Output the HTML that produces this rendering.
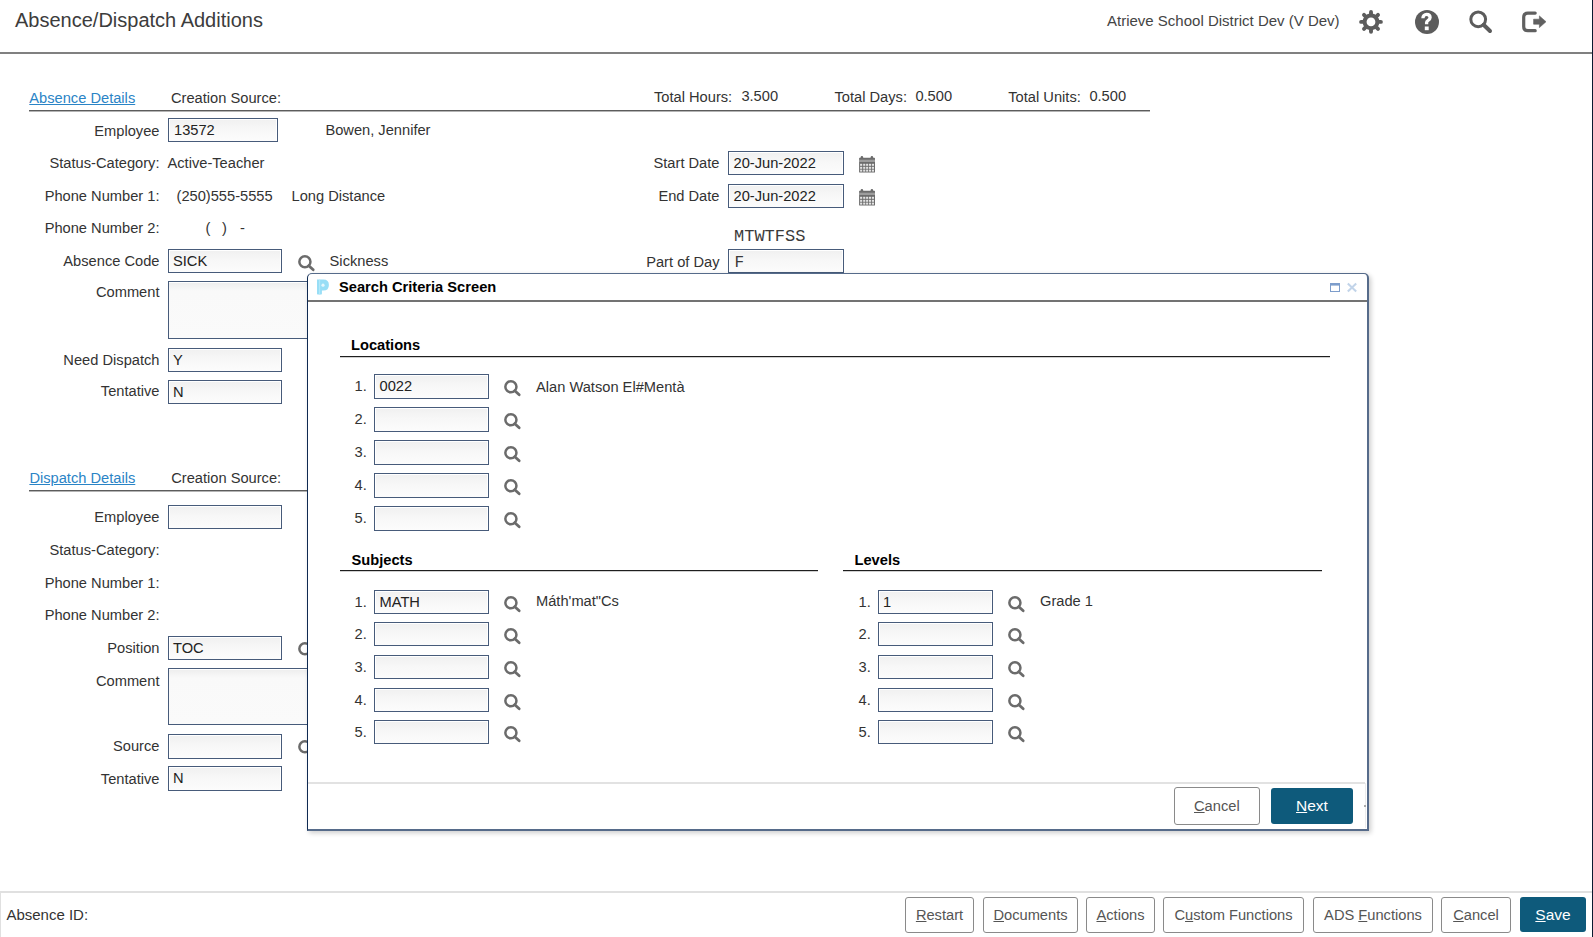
<!DOCTYPE html>
<html><head><meta charset="utf-8"><title>Absence/Dispatch Additions</title>
<style>
html,body{margin:0;padding:0;background:#fff;}
body{width:1593px;height:937px;position:relative;overflow:hidden;font-family:"Liberation Sans",sans-serif;}
.t{position:absolute;white-space:nowrap;}
.ic{position:absolute;overflow:visible;}
.inp{position:absolute;box-sizing:border-box;border:1px solid #475b7a;background:linear-gradient(#f0f0f0,#f7f7f7 45%,#fcfcfc);box-shadow:inset 0 1px 0 #fff,inset 1px 0 0 #fff,inset -1px 0 0 #fff;}
.ta{background:linear-gradient(#ededed,#f9f9f9 9px,#fafafa);box-shadow:inset 0 1px 0 #fff;}
#modal{position:absolute;left:307px;top:272.5px;width:1062px;height:558px;box-sizing:border-box;border:1.5px solid #566b8a;border-right-width:2px;border-bottom-width:2px;border-left:1px solid #0f2a52;border-radius:5px 5px 0 0;background:#fff;box-shadow:2px 2px 5px rgba(0,0,0,0.2);}
.btn{position:absolute;border:1px solid #8a8a8a;border-radius:3px;background:#fff;}
.btnp{position:absolute;background:#0e5a7b;border-radius:3px;}
u{text-decoration:underline;}
</style></head><body>
<div class="t" style="left:15.00px;top:10.07px;font-size:20px;line-height:20px;color:#3c3c3c;font-weight:400;font-family:'Liberation Sans', sans-serif;">Absence/Dispatch Additions</div>
<div class="t" style="left:1107.00px;top:13.40px;font-size:15px;line-height:15px;color:#444;font-weight:400;font-family:'Liberation Sans', sans-serif;">Atrieve School District Dev (V Dev)</div>
<div style="position:absolute;left:0px;top:52px;width:1592px;height:2px;background:#808080"></div>
<div style="position:absolute;left:1592px;top:0px;width:1px;height:937px;background:#0b1a30"></div>
<svg class="ic" style="left:1355px;top:6px" width="32" height="32" viewBox="0 0 32 32">
<circle cx="16" cy="15.9" r="8.4" fill="#5c5c5c"/><line x1="16" y1="15.9" x2="25.90" y2="15.90" stroke="#5c5c5c" stroke-width="3.9" stroke-linecap="round"/><line x1="16" y1="15.9" x2="23.00" y2="22.90" stroke="#5c5c5c" stroke-width="3.9" stroke-linecap="round"/><line x1="16" y1="15.9" x2="16.00" y2="25.80" stroke="#5c5c5c" stroke-width="3.9" stroke-linecap="round"/><line x1="16" y1="15.9" x2="9.00" y2="22.90" stroke="#5c5c5c" stroke-width="3.9" stroke-linecap="round"/><line x1="16" y1="15.9" x2="6.10" y2="15.90" stroke="#5c5c5c" stroke-width="3.9" stroke-linecap="round"/><line x1="16" y1="15.9" x2="9.00" y2="8.90" stroke="#5c5c5c" stroke-width="3.9" stroke-linecap="round"/><line x1="16" y1="15.9" x2="16.00" y2="6.00" stroke="#5c5c5c" stroke-width="3.9" stroke-linecap="round"/><line x1="16" y1="15.9" x2="23.00" y2="8.90" stroke="#5c5c5c" stroke-width="3.9" stroke-linecap="round"/>
<circle cx="16" cy="15.9" r="4.4" fill="#fff"/></svg>
<svg class="ic" style="left:1411px;top:6px" width="32" height="32" viewBox="0 0 32 32">
<circle cx="16" cy="15.9" r="12" fill="#5c5c5c"/>
<path d="M11.9 12.2 C11.9 9.8 13.6 8.3 15.6 8.3 C17.6 8.3 19.1 9.6 19.1 11.6 C19.1 13.2 18 14 16.9 14.6 C16 15.1 15.6 15.6 15.6 16.8 V18.2" fill="none" stroke="#fff" stroke-width="3.3"/>
<rect x="13.8" y="20.5" width="3.9" height="3.7" fill="#fff"/></svg>
<svg class="ic" style="left:1465px;top:6px" width="32" height="32" viewBox="0 0 32 32">
<circle cx="13.2" cy="13.3" r="7.4" fill="none" stroke="#5c5c5c" stroke-width="3"/>
<line x1="18.6" y1="18.8" x2="25" y2="25" stroke="#5c5c5c" stroke-width="4" stroke-linecap="round"/></svg>
<svg class="ic" style="left:1518px;top:6px" width="32" height="32" viewBox="0 0 32 32">
<path d="M17.2 7.1 H9.8 Q5.7 7.1 5.7 11.2 V20.6 Q5.7 24.7 9.8 24.7 H17.2" fill="none" stroke="#606060" stroke-width="3.2" stroke-linecap="round"/>
<path d="M15.6 13.2 H21.4 V9.9 L28 15.7 L21.4 21.6 V18.2 H15.6 Z" fill="#606060" stroke="#606060" stroke-width="0.6" stroke-linejoin="round"/></svg>
<div class="t" style="left:29.30px;top:90.88px;font-size:14.67px;line-height:14.67px;color:#2a84c6;font-weight:400;font-family:'Liberation Sans', sans-serif;text-decoration:underline;">Absence Details</div>
<div class="t" style="left:171.00px;top:90.88px;font-size:14.67px;line-height:14.67px;color:#333;font-weight:400;font-family:'Liberation Sans', sans-serif;">Creation Source:</div>
<div class="t" style="left:654.00px;top:89.88px;font-size:14.67px;line-height:14.67px;color:#333;font-weight:400;font-family:'Liberation Sans', sans-serif;">Total Hours:</div>
<div class="t" style="left:741.40px;top:89.18px;font-size:14.67px;line-height:14.67px;color:#333;font-weight:400;font-family:'Liberation Sans', sans-serif;">3.500</div>
<div class="t" style="left:834.50px;top:89.88px;font-size:14.67px;line-height:14.67px;color:#333;font-weight:400;font-family:'Liberation Sans', sans-serif;">Total Days:</div>
<div class="t" style="left:915.40px;top:89.18px;font-size:14.67px;line-height:14.67px;color:#333;font-weight:400;font-family:'Liberation Sans', sans-serif;">0.500</div>
<div class="t" style="left:1008.30px;top:89.88px;font-size:14.67px;line-height:14.67px;color:#333;font-weight:400;font-family:'Liberation Sans', sans-serif;">Total Units:</div>
<div class="t" style="left:1089.40px;top:89.18px;font-size:14.67px;line-height:14.67px;color:#333;font-weight:400;font-family:'Liberation Sans', sans-serif;">0.500</div>
<div style="position:absolute;left:29px;top:110px;width:1121px;height:1px;background:#5c5c5c"></div>
<div style="position:absolute;left:29px;top:111px;width:1121px;height:1px;background:#b4b4b4"></div>
<div class="t" style="right:1433.50px;top:123.58px;font-size:14.67px;line-height:14.67px;color:#333;font-weight:400;font-family:'Liberation Sans', sans-serif;">Employee</div>
<div class="inp" style="left:168px;top:118px;width:110px;height:24px;"></div>
<div class="t" style="left:174.00px;top:123.18px;font-size:14.67px;line-height:14.67px;color:#222;font-weight:400;font-family:'Liberation Sans', sans-serif;">13572</div>
<div class="t" style="left:325.40px;top:122.88px;font-size:14.67px;line-height:14.67px;color:#333;font-weight:400;font-family:'Liberation Sans', sans-serif;">Bowen, Jennifer</div>
<div class="t" style="right:1433.50px;top:155.98px;font-size:14.67px;line-height:14.67px;color:#333;font-weight:400;font-family:'Liberation Sans', sans-serif;">Status-Category:</div>
<div class="t" style="left:167.50px;top:155.98px;font-size:14.67px;line-height:14.67px;color:#333;font-weight:400;font-family:'Liberation Sans', sans-serif;">Active-Teacher</div>
<div class="t" style="right:1433.50px;top:188.58px;font-size:14.67px;line-height:14.67px;color:#333;font-weight:400;font-family:'Liberation Sans', sans-serif;">Phone Number 1:</div>
<div class="t" style="left:176.50px;top:188.58px;font-size:14.67px;line-height:14.67px;color:#333;font-weight:400;font-family:'Liberation Sans', sans-serif;">(250)555-5555</div>
<div class="t" style="left:291.50px;top:188.58px;font-size:14.67px;line-height:14.67px;color:#333;font-weight:400;font-family:'Liberation Sans', sans-serif;">Long Distance</div>
<div class="t" style="right:1433.50px;top:221.28px;font-size:14.67px;line-height:14.67px;color:#333;font-weight:400;font-family:'Liberation Sans', sans-serif;">Phone Number 2:</div>
<div class="t" style="left:205.50px;top:221.28px;font-size:14.67px;line-height:14.67px;color:#333;font-weight:400;font-family:'Liberation Sans', sans-serif;">(</div>
<div class="t" style="left:222.00px;top:221.28px;font-size:14.67px;line-height:14.67px;color:#333;font-weight:400;font-family:'Liberation Sans', sans-serif;">)</div>
<div class="t" style="left:240.00px;top:221.28px;font-size:14.67px;line-height:14.67px;color:#333;font-weight:400;font-family:'Liberation Sans', sans-serif;">-</div>
<div class="t" style="right:1433.50px;top:254.28px;font-size:14.67px;line-height:14.67px;color:#333;font-weight:400;font-family:'Liberation Sans', sans-serif;">Absence Code</div>
<div class="inp" style="left:168px;top:249px;width:114px;height:24px;"></div>
<div class="t" style="left:173.00px;top:254.18px;font-size:14.67px;line-height:14.67px;color:#222;font-weight:400;font-family:'Liberation Sans', sans-serif;">SICK</div>
<svg class="ic" style="left:297.5px;top:255px" width="18" height="17" viewBox="0 0 18 17"><circle cx="6.9" cy="6.8" r="5.55" fill="none" stroke="#6b6b6b" stroke-width="2.5"/><line x1="10.8" y1="10.7" x2="15.2" y2="14.8" stroke="#6b6b6b" stroke-width="2.8" stroke-linecap="round"/></svg>
<div class="t" style="left:329.60px;top:253.68px;font-size:14.67px;line-height:14.67px;color:#333;font-weight:400;font-family:'Liberation Sans', sans-serif;">Sickness</div>
<div class="t" style="right:1433.50px;top:285.08px;font-size:14.67px;line-height:14.67px;color:#333;font-weight:400;font-family:'Liberation Sans', sans-serif;">Comment</div>
<div class="inp ta" style="left:168px;top:281px;width:170px;height:58px;"></div>
<div class="t" style="right:1433.50px;top:352.68px;font-size:14.67px;line-height:14.67px;color:#333;font-weight:400;font-family:'Liberation Sans', sans-serif;">Need Dispatch</div>
<div class="inp" style="left:168px;top:348px;width:114px;height:24px;"></div>
<div class="t" style="left:173.00px;top:353.18px;font-size:14.67px;line-height:14.67px;color:#222;font-weight:400;font-family:'Liberation Sans', sans-serif;">Y</div>
<div class="t" style="right:1433.50px;top:384.48px;font-size:14.67px;line-height:14.67px;color:#333;font-weight:400;font-family:'Liberation Sans', sans-serif;">Tentative</div>
<div class="inp" style="left:168px;top:380px;width:114px;height:24px;"></div>
<div class="t" style="left:173.00px;top:385.18px;font-size:14.67px;line-height:14.67px;color:#222;font-weight:400;font-family:'Liberation Sans', sans-serif;">N</div>
<div class="t" style="right:873.50px;top:156.38px;font-size:14.67px;line-height:14.67px;color:#333;font-weight:400;font-family:'Liberation Sans', sans-serif;">Start Date</div>
<div class="inp" style="left:728px;top:151px;width:116px;height:24px;"></div>
<div class="t" style="left:733.50px;top:156.18px;font-size:14.67px;line-height:14.67px;color:#222;font-weight:400;font-family:'Liberation Sans', sans-serif;">20-Jun-2022</div>
<svg class="ic" style="left:855px;top:152px" width="24" height="24" viewBox="0 0 24 24"><rect x="4.1" y="5.8" width="15.9" height="14.7" rx="0.6" fill="#6c6c6c"/><circle cx="6.9" cy="5.4" r="1.3" fill="#6c6c6c"/><circle cx="16.9" cy="5.4" r="1.3" fill="#6c6c6c"/><rect x="4.1" y="7.7" width="15.9" height="2.3" fill="#9c9c9c"/><rect x="5.1" y="11.8" width="2.1" height="2" fill="#e4e4e4"/><rect x="5.1" y="14.8" width="2.1" height="2" fill="#e4e4e4"/><rect x="5.1" y="17.6" width="2.1" height="2" fill="#e4e4e4"/><rect x="8.2" y="11.8" width="2.1" height="2" fill="#e4e4e4"/><rect x="8.2" y="14.8" width="2.1" height="2" fill="#e4e4e4"/><rect x="8.2" y="17.6" width="2.1" height="2" fill="#e4e4e4"/><rect x="11.1" y="11.8" width="2.1" height="2" fill="#e4e4e4"/><rect x="11.1" y="14.8" width="2.1" height="2" fill="#e4e4e4"/><rect x="11.1" y="17.6" width="2.1" height="2" fill="#e4e4e4"/><rect x="14.0" y="11.8" width="2.1" height="2" fill="#e4e4e4"/><rect x="14.0" y="14.8" width="2.1" height="2" fill="#e4e4e4"/><rect x="14.0" y="17.6" width="2.1" height="2" fill="#e4e4e4"/><rect x="16.9" y="11.8" width="2.1" height="2" fill="#e4e4e4"/><rect x="16.9" y="14.8" width="2.1" height="2" fill="#e4e4e4"/><rect x="16.9" y="17.6" width="2.1" height="2" fill="#e4e4e4"/></svg>
<div class="t" style="right:873.50px;top:188.88px;font-size:14.67px;line-height:14.67px;color:#333;font-weight:400;font-family:'Liberation Sans', sans-serif;">End Date</div>
<div class="inp" style="left:728px;top:184px;width:116px;height:24px;"></div>
<div class="t" style="left:733.50px;top:189.18px;font-size:14.67px;line-height:14.67px;color:#222;font-weight:400;font-family:'Liberation Sans', sans-serif;">20-Jun-2022</div>
<svg class="ic" style="left:855px;top:185px" width="24" height="24" viewBox="0 0 24 24"><rect x="4.1" y="5.8" width="15.9" height="14.7" rx="0.6" fill="#6c6c6c"/><circle cx="6.9" cy="5.4" r="1.3" fill="#6c6c6c"/><circle cx="16.9" cy="5.4" r="1.3" fill="#6c6c6c"/><rect x="4.1" y="7.7" width="15.9" height="2.3" fill="#9c9c9c"/><rect x="5.1" y="11.8" width="2.1" height="2" fill="#e4e4e4"/><rect x="5.1" y="14.8" width="2.1" height="2" fill="#e4e4e4"/><rect x="5.1" y="17.6" width="2.1" height="2" fill="#e4e4e4"/><rect x="8.2" y="11.8" width="2.1" height="2" fill="#e4e4e4"/><rect x="8.2" y="14.8" width="2.1" height="2" fill="#e4e4e4"/><rect x="8.2" y="17.6" width="2.1" height="2" fill="#e4e4e4"/><rect x="11.1" y="11.8" width="2.1" height="2" fill="#e4e4e4"/><rect x="11.1" y="14.8" width="2.1" height="2" fill="#e4e4e4"/><rect x="11.1" y="17.6" width="2.1" height="2" fill="#e4e4e4"/><rect x="14.0" y="11.8" width="2.1" height="2" fill="#e4e4e4"/><rect x="14.0" y="14.8" width="2.1" height="2" fill="#e4e4e4"/><rect x="14.0" y="17.6" width="2.1" height="2" fill="#e4e4e4"/><rect x="16.9" y="11.8" width="2.1" height="2" fill="#e4e4e4"/><rect x="16.9" y="14.8" width="2.1" height="2" fill="#e4e4e4"/><rect x="16.9" y="17.6" width="2.1" height="2" fill="#e4e4e4"/></svg>
<div class="t" style="left:734.00px;top:228.27px;font-size:17px;line-height:17px;color:#3a3a3a;font-weight:400;font-family:'Liberation Mono', monospace;">MTWTFSS</div>
<div class="t" style="right:873.50px;top:254.78px;font-size:14.67px;line-height:14.67px;color:#333;font-weight:400;font-family:'Liberation Sans', sans-serif;">Part of Day</div>
<div class="inp" style="left:728px;top:249px;width:116px;height:24px;"></div>
<div class="t" style="left:734.50px;top:255.34px;font-size:16px;line-height:16px;color:#3a3a3a;font-weight:400;font-family:'Liberation Mono', monospace;">F</div>
<div class="t" style="left:29.40px;top:471.18px;font-size:14.67px;line-height:14.67px;color:#2a84c6;font-weight:400;font-family:'Liberation Sans', sans-serif;text-decoration:underline;">Dispatch Details</div>
<div class="t" style="left:171.20px;top:471.18px;font-size:14.67px;line-height:14.67px;color:#333;font-weight:400;font-family:'Liberation Sans', sans-serif;">Creation Source:</div>
<div style="position:absolute;left:29px;top:490px;width:300px;height:1px;background:#5c5c5c"></div>
<div style="position:absolute;left:29px;top:491px;width:300px;height:1px;background:#b4b4b4"></div>
<div class="t" style="right:1433.50px;top:510.28px;font-size:14.67px;line-height:14.67px;color:#333;font-weight:400;font-family:'Liberation Sans', sans-serif;">Employee</div>
<div class="inp" style="left:168px;top:505px;width:114px;height:24px;"></div>
<div class="t" style="right:1433.50px;top:542.78px;font-size:14.67px;line-height:14.67px;color:#333;font-weight:400;font-family:'Liberation Sans', sans-serif;">Status-Category:</div>
<div class="t" style="right:1433.50px;top:575.88px;font-size:14.67px;line-height:14.67px;color:#333;font-weight:400;font-family:'Liberation Sans', sans-serif;">Phone Number 1:</div>
<div class="t" style="right:1433.50px;top:608.38px;font-size:14.67px;line-height:14.67px;color:#333;font-weight:400;font-family:'Liberation Sans', sans-serif;">Phone Number 2:</div>
<div class="t" style="right:1433.50px;top:640.88px;font-size:14.67px;line-height:14.67px;color:#333;font-weight:400;font-family:'Liberation Sans', sans-serif;">Position</div>
<div class="inp" style="left:168px;top:636px;width:114px;height:24px;"></div>
<div class="t" style="left:173.00px;top:641.18px;font-size:14.67px;line-height:14.67px;color:#222;font-weight:400;font-family:'Liberation Sans', sans-serif;">TOC</div>
<svg class="ic" style="left:297.5px;top:642px" width="18" height="17" viewBox="0 0 18 17"><circle cx="6.9" cy="6.8" r="5.55" fill="none" stroke="#6b6b6b" stroke-width="2.5"/><line x1="10.8" y1="10.7" x2="15.2" y2="14.8" stroke="#6b6b6b" stroke-width="2.8" stroke-linecap="round"/></svg>
<div class="t" style="right:1433.50px;top:673.68px;font-size:14.67px;line-height:14.67px;color:#333;font-weight:400;font-family:'Liberation Sans', sans-serif;">Comment</div>
<div class="inp ta" style="left:168px;top:668px;width:170px;height:57px;"></div>
<div class="t" style="right:1433.50px;top:739.08px;font-size:14.67px;line-height:14.67px;color:#333;font-weight:400;font-family:'Liberation Sans', sans-serif;">Source</div>
<div class="inp" style="left:168px;top:734px;width:114px;height:25px;"></div>
<svg class="ic" style="left:297.5px;top:740px" width="18" height="17" viewBox="0 0 18 17"><circle cx="6.9" cy="6.8" r="5.55" fill="none" stroke="#6b6b6b" stroke-width="2.5"/><line x1="10.8" y1="10.7" x2="15.2" y2="14.8" stroke="#6b6b6b" stroke-width="2.8" stroke-linecap="round"/></svg>
<div class="t" style="right:1433.50px;top:771.88px;font-size:14.67px;line-height:14.67px;color:#333;font-weight:400;font-family:'Liberation Sans', sans-serif;">Tentative</div>
<div class="inp" style="left:168px;top:766px;width:114px;height:25px;"></div>
<div class="t" style="left:173.00px;top:771.18px;font-size:14.67px;line-height:14.67px;color:#222;font-weight:400;font-family:'Liberation Sans', sans-serif;">N</div>
<div id="modal"></div>
<div style="position:absolute;left:308px;top:300px;width:1059px;height:2px;background:#737373"></div>
<svg class="ic" style="left:313px;top:276px" width="20" height="22" viewBox="0 0 20 22">
<path d="M4 3.6 H10.4 Q15.9 3.6 15.9 9.1 Q15.9 14.6 10.4 14.6 H8.9 V17.8 Q8.9 18.5 8.2 18.5 H4.7 Q4 18.5 4 17.8 Z" fill="#98def6"/>
<rect x="6.1" y="3.6" width="1" height="14.9" fill="#b5e9fa"/>
<circle cx="10" cy="9.2" r="1.6" fill="#e6f7fd"/></svg>
<div class="t" style="left:339.00px;top:280.08px;font-size:14.67px;line-height:14.67px;color:#000;font-weight:700;font-family:'Liberation Sans', sans-serif;">Search Criteria Screen</div>
<svg class="ic" style="left:1330px;top:283px" width="10" height="9" viewBox="0 0 10 9">
<rect x="0.5" y="0.5" width="9" height="8" fill="none" stroke="#7d9dcb" stroke-width="1"/>
<rect x="0" y="0" width="10" height="2.6" fill="#7d9dcb"/></svg>
<svg class="ic" style="left:1347px;top:283px" width="10" height="9" viewBox="0 0 10 9">
<path d="M0.8 0.6 L9.2 8.4 M9.2 0.6 L0.8 8.4" stroke="#c2d4e9" stroke-width="2.1"/></svg>
<div class="t" style="left:351.00px;top:337.68px;font-size:14.67px;line-height:14.67px;color:#000;font-weight:700;font-family:'Liberation Sans', sans-serif;">Locations</div>
<div style="position:absolute;left:340px;top:356px;width:990px;height:1px;background:#1e1e1e"></div>
<div style="position:absolute;left:340px;top:357px;width:990px;height:1px;background:#d0d0d0"></div>
<div class="t" style="left:354.50px;top:379.48px;font-size:14.67px;line-height:14.67px;color:#333;font-weight:400;font-family:'Liberation Sans', sans-serif;">1.</div>
<div class="inp" style="left:374px;top:374px;width:115px;height:25px;"></div>
<div class="t" style="left:379.50px;top:379.18px;font-size:14.67px;line-height:14.67px;color:#222;font-weight:400;font-family:'Liberation Sans', sans-serif;">0022</div>
<svg class="ic" style="left:504px;top:380px" width="18" height="17" viewBox="0 0 18 17"><circle cx="6.9" cy="6.8" r="5.55" fill="none" stroke="#6b6b6b" stroke-width="2.5"/><line x1="10.8" y1="10.7" x2="15.2" y2="14.8" stroke="#6b6b6b" stroke-width="2.8" stroke-linecap="round"/></svg>
<div class="t" style="left:354.50px;top:412.48px;font-size:14.67px;line-height:14.67px;color:#333;font-weight:400;font-family:'Liberation Sans', sans-serif;">2.</div>
<div class="inp" style="left:374px;top:407px;width:115px;height:25px;"></div>
<svg class="ic" style="left:504px;top:413px" width="18" height="17" viewBox="0 0 18 17"><circle cx="6.9" cy="6.8" r="5.55" fill="none" stroke="#6b6b6b" stroke-width="2.5"/><line x1="10.8" y1="10.7" x2="15.2" y2="14.8" stroke="#6b6b6b" stroke-width="2.8" stroke-linecap="round"/></svg>
<div class="t" style="left:354.50px;top:445.48px;font-size:14.67px;line-height:14.67px;color:#333;font-weight:400;font-family:'Liberation Sans', sans-serif;">3.</div>
<div class="inp" style="left:374px;top:440px;width:115px;height:25px;"></div>
<svg class="ic" style="left:504px;top:446px" width="18" height="17" viewBox="0 0 18 17"><circle cx="6.9" cy="6.8" r="5.55" fill="none" stroke="#6b6b6b" stroke-width="2.5"/><line x1="10.8" y1="10.7" x2="15.2" y2="14.8" stroke="#6b6b6b" stroke-width="2.8" stroke-linecap="round"/></svg>
<div class="t" style="left:354.50px;top:478.48px;font-size:14.67px;line-height:14.67px;color:#333;font-weight:400;font-family:'Liberation Sans', sans-serif;">4.</div>
<div class="inp" style="left:374px;top:473px;width:115px;height:25px;"></div>
<svg class="ic" style="left:504px;top:479px" width="18" height="17" viewBox="0 0 18 17"><circle cx="6.9" cy="6.8" r="5.55" fill="none" stroke="#6b6b6b" stroke-width="2.5"/><line x1="10.8" y1="10.7" x2="15.2" y2="14.8" stroke="#6b6b6b" stroke-width="2.8" stroke-linecap="round"/></svg>
<div class="t" style="left:354.50px;top:511.48px;font-size:14.67px;line-height:14.67px;color:#333;font-weight:400;font-family:'Liberation Sans', sans-serif;">5.</div>
<div class="inp" style="left:374px;top:506px;width:115px;height:25px;"></div>
<svg class="ic" style="left:504px;top:512px" width="18" height="17" viewBox="0 0 18 17"><circle cx="6.9" cy="6.8" r="5.55" fill="none" stroke="#6b6b6b" stroke-width="2.5"/><line x1="10.8" y1="10.7" x2="15.2" y2="14.8" stroke="#6b6b6b" stroke-width="2.8" stroke-linecap="round"/></svg>
<div class="t" style="left:536.00px;top:379.68px;font-size:14.67px;line-height:14.67px;color:#333;font-weight:400;font-family:'Liberation Sans', sans-serif;">Alan Watson El#Mentà</div>
<div class="t" style="left:351.50px;top:552.68px;font-size:14.67px;line-height:14.67px;color:#000;font-weight:700;font-family:'Liberation Sans', sans-serif;">Subjects</div>
<div style="position:absolute;left:340px;top:570px;width:478px;height:1px;background:#1e1e1e"></div>
<div style="position:absolute;left:340px;top:571px;width:478px;height:1px;background:#d0d0d0"></div>
<div class="t" style="left:854.50px;top:552.68px;font-size:14.67px;line-height:14.67px;color:#000;font-weight:700;font-family:'Liberation Sans', sans-serif;">Levels</div>
<div style="position:absolute;left:843px;top:570px;width:479px;height:1px;background:#1e1e1e"></div>
<div style="position:absolute;left:843px;top:571px;width:479px;height:1px;background:#d0d0d0"></div>
<div class="t" style="left:354.50px;top:595.48px;font-size:14.67px;line-height:14.67px;color:#333;font-weight:400;font-family:'Liberation Sans', sans-serif;">1.</div>
<div class="inp" style="left:374px;top:590px;width:115px;height:24px;"></div>
<div class="t" style="left:379.50px;top:595.18px;font-size:14.67px;line-height:14.67px;color:#222;font-weight:400;font-family:'Liberation Sans', sans-serif;">MATH</div>
<svg class="ic" style="left:504px;top:596px" width="18" height="17" viewBox="0 0 18 17"><circle cx="6.9" cy="6.8" r="5.55" fill="none" stroke="#6b6b6b" stroke-width="2.5"/><line x1="10.8" y1="10.7" x2="15.2" y2="14.8" stroke="#6b6b6b" stroke-width="2.8" stroke-linecap="round"/></svg>
<div class="t" style="left:858.50px;top:595.48px;font-size:14.67px;line-height:14.67px;color:#333;font-weight:400;font-family:'Liberation Sans', sans-serif;">1.</div>
<div class="inp" style="left:878px;top:590px;width:115px;height:24px;"></div>
<div class="t" style="left:883.00px;top:595.18px;font-size:14.67px;line-height:14.67px;color:#222;font-weight:400;font-family:'Liberation Sans', sans-serif;">1</div>
<svg class="ic" style="left:1008px;top:596px" width="18" height="17" viewBox="0 0 18 17"><circle cx="6.9" cy="6.8" r="5.55" fill="none" stroke="#6b6b6b" stroke-width="2.5"/><line x1="10.8" y1="10.7" x2="15.2" y2="14.8" stroke="#6b6b6b" stroke-width="2.8" stroke-linecap="round"/></svg>
<div class="t" style="left:354.50px;top:627.48px;font-size:14.67px;line-height:14.67px;color:#333;font-weight:400;font-family:'Liberation Sans', sans-serif;">2.</div>
<div class="inp" style="left:374px;top:622px;width:115px;height:24px;"></div>
<svg class="ic" style="left:504px;top:628px" width="18" height="17" viewBox="0 0 18 17"><circle cx="6.9" cy="6.8" r="5.55" fill="none" stroke="#6b6b6b" stroke-width="2.5"/><line x1="10.8" y1="10.7" x2="15.2" y2="14.8" stroke="#6b6b6b" stroke-width="2.8" stroke-linecap="round"/></svg>
<div class="t" style="left:858.50px;top:627.48px;font-size:14.67px;line-height:14.67px;color:#333;font-weight:400;font-family:'Liberation Sans', sans-serif;">2.</div>
<div class="inp" style="left:878px;top:622px;width:115px;height:24px;"></div>
<svg class="ic" style="left:1008px;top:628px" width="18" height="17" viewBox="0 0 18 17"><circle cx="6.9" cy="6.8" r="5.55" fill="none" stroke="#6b6b6b" stroke-width="2.5"/><line x1="10.8" y1="10.7" x2="15.2" y2="14.8" stroke="#6b6b6b" stroke-width="2.8" stroke-linecap="round"/></svg>
<div class="t" style="left:354.50px;top:660.48px;font-size:14.67px;line-height:14.67px;color:#333;font-weight:400;font-family:'Liberation Sans', sans-serif;">3.</div>
<div class="inp" style="left:374px;top:655px;width:115px;height:24px;"></div>
<svg class="ic" style="left:504px;top:661px" width="18" height="17" viewBox="0 0 18 17"><circle cx="6.9" cy="6.8" r="5.55" fill="none" stroke="#6b6b6b" stroke-width="2.5"/><line x1="10.8" y1="10.7" x2="15.2" y2="14.8" stroke="#6b6b6b" stroke-width="2.8" stroke-linecap="round"/></svg>
<div class="t" style="left:858.50px;top:660.48px;font-size:14.67px;line-height:14.67px;color:#333;font-weight:400;font-family:'Liberation Sans', sans-serif;">3.</div>
<div class="inp" style="left:878px;top:655px;width:115px;height:24px;"></div>
<svg class="ic" style="left:1008px;top:661px" width="18" height="17" viewBox="0 0 18 17"><circle cx="6.9" cy="6.8" r="5.55" fill="none" stroke="#6b6b6b" stroke-width="2.5"/><line x1="10.8" y1="10.7" x2="15.2" y2="14.8" stroke="#6b6b6b" stroke-width="2.8" stroke-linecap="round"/></svg>
<div class="t" style="left:354.50px;top:693.48px;font-size:14.67px;line-height:14.67px;color:#333;font-weight:400;font-family:'Liberation Sans', sans-serif;">4.</div>
<div class="inp" style="left:374px;top:688px;width:115px;height:24px;"></div>
<svg class="ic" style="left:504px;top:694px" width="18" height="17" viewBox="0 0 18 17"><circle cx="6.9" cy="6.8" r="5.55" fill="none" stroke="#6b6b6b" stroke-width="2.5"/><line x1="10.8" y1="10.7" x2="15.2" y2="14.8" stroke="#6b6b6b" stroke-width="2.8" stroke-linecap="round"/></svg>
<div class="t" style="left:858.50px;top:693.48px;font-size:14.67px;line-height:14.67px;color:#333;font-weight:400;font-family:'Liberation Sans', sans-serif;">4.</div>
<div class="inp" style="left:878px;top:688px;width:115px;height:24px;"></div>
<svg class="ic" style="left:1008px;top:694px" width="18" height="17" viewBox="0 0 18 17"><circle cx="6.9" cy="6.8" r="5.55" fill="none" stroke="#6b6b6b" stroke-width="2.5"/><line x1="10.8" y1="10.7" x2="15.2" y2="14.8" stroke="#6b6b6b" stroke-width="2.8" stroke-linecap="round"/></svg>
<div class="t" style="left:354.50px;top:725.48px;font-size:14.67px;line-height:14.67px;color:#333;font-weight:400;font-family:'Liberation Sans', sans-serif;">5.</div>
<div class="inp" style="left:374px;top:720px;width:115px;height:24px;"></div>
<svg class="ic" style="left:504px;top:726px" width="18" height="17" viewBox="0 0 18 17"><circle cx="6.9" cy="6.8" r="5.55" fill="none" stroke="#6b6b6b" stroke-width="2.5"/><line x1="10.8" y1="10.7" x2="15.2" y2="14.8" stroke="#6b6b6b" stroke-width="2.8" stroke-linecap="round"/></svg>
<div class="t" style="left:858.50px;top:725.48px;font-size:14.67px;line-height:14.67px;color:#333;font-weight:400;font-family:'Liberation Sans', sans-serif;">5.</div>
<div class="inp" style="left:878px;top:720px;width:115px;height:24px;"></div>
<svg class="ic" style="left:1008px;top:726px" width="18" height="17" viewBox="0 0 18 17"><circle cx="6.9" cy="6.8" r="5.55" fill="none" stroke="#6b6b6b" stroke-width="2.5"/><line x1="10.8" y1="10.7" x2="15.2" y2="14.8" stroke="#6b6b6b" stroke-width="2.8" stroke-linecap="round"/></svg>
<div class="t" style="left:536.00px;top:594.48px;font-size:14.67px;line-height:14.67px;color:#333;font-weight:400;font-family:'Liberation Sans', sans-serif;">Máth'mat"Cs</div>
<div class="t" style="left:1040.00px;top:594.48px;font-size:14.67px;line-height:14.67px;color:#333;font-weight:400;font-family:'Liberation Sans', sans-serif;">Grade 1</div>
<div style="position:absolute;left:308px;top:782px;width:1057px;height:2px;background:#e2e2e2"></div>
<div style="position:absolute;left:1365px;top:783px;width:1px;height:45px;background:#ececec"></div>
<div style="position:absolute;left:1364px;top:805px;width:1.5px;height:1.5px;background:#aaa"></div>
<div class="btn" style="left:1174px;top:787px;width:84px;height:36px;"></div>
<div class="t" style="left:1194.00px;top:799.08px;font-size:14.67px;line-height:14.67px;color:#555;font-weight:400;font-family:'Liberation Sans', sans-serif;"><u>C</u>ancel</div>
<div class="btnp" style="left:1271px;top:788px;width:82px;height:36px;"></div>
<div class="t" style="left:1296.00px;top:798.38px;font-size:15.5px;line-height:15.5px;color:#fff;font-weight:400;font-family:'Liberation Sans', sans-serif;"><u>N</u>ext</div>
<div style="position:absolute;left:0px;top:891px;width:1592px;height:2px;background:#e0e0e0"></div>
<div style="position:absolute;left:0px;top:893px;width:1px;height:44px;background:#e0e0e0"></div>
<div class="t" style="left:6.40px;top:907.10px;font-size:15px;line-height:15px;color:#333;font-weight:400;font-family:'Liberation Sans', sans-serif;">Absence ID:</div>
<div class="btn" style="left:905px;top:897px;width:67px;height:34px;"></div>
<div class="t" style="left:905.00px;top:907.78px;font-size:14.67px;line-height:14.67px;color:#555;font-weight:400;font-family:'Liberation Sans', sans-serif;width:69px;text-align:center;"><u>R</u>estart</div>
<div class="btn" style="left:983px;top:897px;width:93px;height:34px;"></div>
<div class="t" style="left:983.00px;top:907.78px;font-size:14.67px;line-height:14.67px;color:#555;font-weight:400;font-family:'Liberation Sans', sans-serif;width:95px;text-align:center;"><u>D</u>ocuments</div>
<div class="btn" style="left:1086px;top:897px;width:67px;height:34px;"></div>
<div class="t" style="left:1086.00px;top:907.78px;font-size:14.67px;line-height:14.67px;color:#555;font-weight:400;font-family:'Liberation Sans', sans-serif;width:69px;text-align:center;"><u>A</u>ctions</div>
<div class="btn" style="left:1163px;top:897px;width:139px;height:34px;"></div>
<div class="t" style="left:1163.00px;top:907.78px;font-size:14.67px;line-height:14.67px;color:#555;font-weight:400;font-family:'Liberation Sans', sans-serif;width:141px;text-align:center;">C<u>u</u>stom Functions</div>
<div class="btn" style="left:1313px;top:897px;width:118px;height:34px;"></div>
<div class="t" style="left:1313.00px;top:907.78px;font-size:14.67px;line-height:14.67px;color:#555;font-weight:400;font-family:'Liberation Sans', sans-serif;width:120px;text-align:center;">ADS <u>F</u>unctions</div>
<div class="btn" style="left:1441px;top:897px;width:68px;height:34px;"></div>
<div class="t" style="left:1441.00px;top:907.78px;font-size:14.67px;line-height:14.67px;color:#555;font-weight:400;font-family:'Liberation Sans', sans-serif;width:70px;text-align:center;"><u>C</u>ancel</div>
<div class="btnp" style="left:1520px;top:897px;width:66px;height:35px;"></div>
<div class="t" style="left:1520.00px;top:907.08px;font-size:15.5px;line-height:15.5px;color:#fff;font-weight:400;font-family:'Liberation Sans', sans-serif;width:66px;text-align:center;"><u>S</u>ave</div>
</body></html>
